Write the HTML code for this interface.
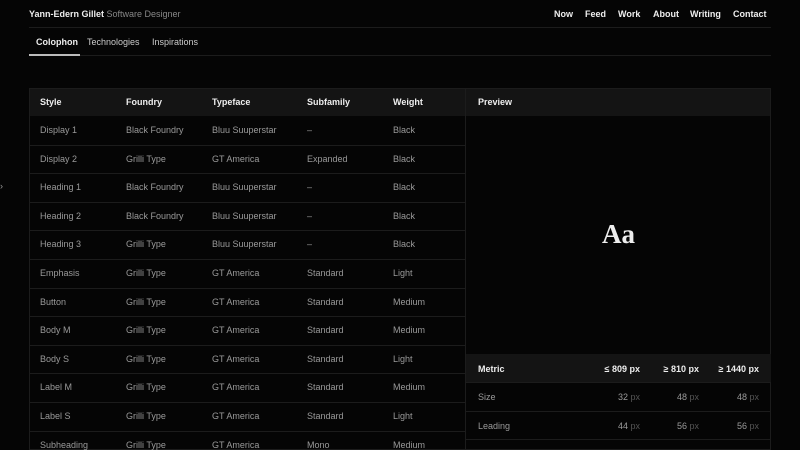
<!DOCTYPE html><html><head><style>
*{margin:0;padding:0;box-sizing:border-box}
body{width:800px;height:450px;overflow:hidden;background:#050505;font-family:"Liberation Sans",sans-serif;color:#eee;position:relative;font-size:9px}
.a{position:absolute;white-space:nowrap}
.hl{position:absolute;height:1px;background:#1c1c1c}
.g{color:#9a9a9a}
</style></head><body>
<div class="a" style="left:29px;top:9px;font-weight:bold;font-size:9px">Yann-Edern Gillet <span style="font-weight:normal;color:#888">Software Designer</span></div>
<div class="a" style="left:554px;top:9px;font-weight:bold;word-spacing:0">Now</div>
<div class="a" style="left:585px;top:9px;font-weight:bold">Feed</div>
<div class="a" style="left:618px;top:9px;font-weight:bold">Work</div>
<div class="a" style="left:653px;top:9px;font-weight:bold">About</div>
<div class="a" style="left:690px;top:9px;font-weight:bold">Writing</div>
<div class="a" style="left:733px;top:9px;font-weight:bold">Contact</div>
<div class="hl" style="left:29px;top:27px;width:742px"></div>
<div class="a" style="left:36px;top:37px;font-weight:bold">Colophon</div>
<div class="a" style="left:87px;top:37px;color:#ccc">Technologies</div>
<div class="a" style="left:152px;top:37px;color:#ccc">Inspirations</div>
<div class="hl" style="left:29px;top:55px;width:742px"></div>
<div class="a" style="left:29px;top:54px;width:51px;height:2px;background:#bbb"></div>
<div class="a g" style="left:0;top:181px">›</div>
<div class="a" style="left:29px;top:88px;width:742px;height:28px;background:#141414"></div>
<div class="a" style="left:29px;top:88px;width:742px;height:362px;border:1px solid #1c1c1c"></div>
<div class="a" style="left:465px;top:88px;width:1px;height:362px;background:#1c1c1c"></div>
<div class="a" style="left:466px;top:354px;width:305px;height:28px;background:#141414"></div>
<div style="font-weight:bold">
<div class="a" style="left:40px;top:97px">Style</div><div class="a" style="left:126px;top:97px">Foundry</div><div class="a" style="left:212px;top:97px">Typeface</div><div class="a" style="left:307px;top:97px">Subfamily</div><div class="a" style="left:393px;top:97px">Weight</div><div class="a" style="left:478px;top:97px">Preview</div>
<div class="a" style="left:478px;top:364px">Metric</div>
<div class="a" style="right:160px;top:364px">≤ 809 px</div><div class="a" style="right:101px;top:364px">≥ 810 px</div><div class="a" style="right:41px;top:364px">≥ 1440 px</div>
</div>
<div class="a" style="left:602px;top:219px;font-family:'Liberation Serif',serif;font-weight:bold;font-size:27px">Aa</div>
<div class="hl" style="left:466px;top:382px;width:305px"></div>
<div class="hl" style="left:466px;top:411px;width:305px"></div>
<div class="hl" style="left:466px;top:439px;width:305px"></div>
<div class="a g" style="left:478px;top:392px">Size</div><div class="a g" style="left:478px;top:421px">Leading</div>
<div class="a g" style="right:160px;top:392px">32 <span style="color:#555">px</span></div><div class="a g" style="right:101px;top:392px">48 <span style="color:#555">px</span></div><div class="a g" style="right:41px;top:392px">48 <span style="color:#555">px</span></div>
<div class="a g" style="right:160px;top:421px">44 <span style="color:#555">px</span></div><div class="a g" style="right:101px;top:421px">56 <span style="color:#555">px</span></div><div class="a g" style="right:41px;top:421px">56 <span style="color:#555">px</span></div>
<div id="rows"></div>
<script>
var d=[["Display 1","Black Foundry","Bluu Suuperstar","–","Black"],["Display 2","Grilli Type","GT America","Expanded","Black"],["Heading 1","Black Foundry","Bluu Suuperstar","–","Black"],["Heading 2","Black Foundry","Bluu Suuperstar","–","Black"],["Heading 3","Grilli Type","Bluu Suuperstar","–","Black"],["Emphasis","Grilli Type","GT America","Standard","Light"],["Button","Grilli Type","GT America","Standard","Medium"],["Body M","Grilli Type","GT America","Standard","Medium"],["Body S","Grilli Type","GT America","Standard","Light"],["Label M","Grilli Type","GT America","Standard","Medium"],["Label S","Grilli Type","GT America","Standard","Light"],["Subheading","Grilli Type","GT America","Mono","Medium"]];
var x=[40,126,212,307,393],h="";
d.forEach(function(r,i){var y=116+i*28.6;if(i>0)h+='<div class="hl" style="left:29px;top:'+y.toFixed(1)+'px;width:436px"></div>';r.forEach(function(c,j){h+='<div class="a g" style="left:'+x[j]+'px;top:'+(y+9).toFixed(1)+'px">'+c+'</div>'})});
document.getElementById("rows").innerHTML=h;
</script>
</body></html>
